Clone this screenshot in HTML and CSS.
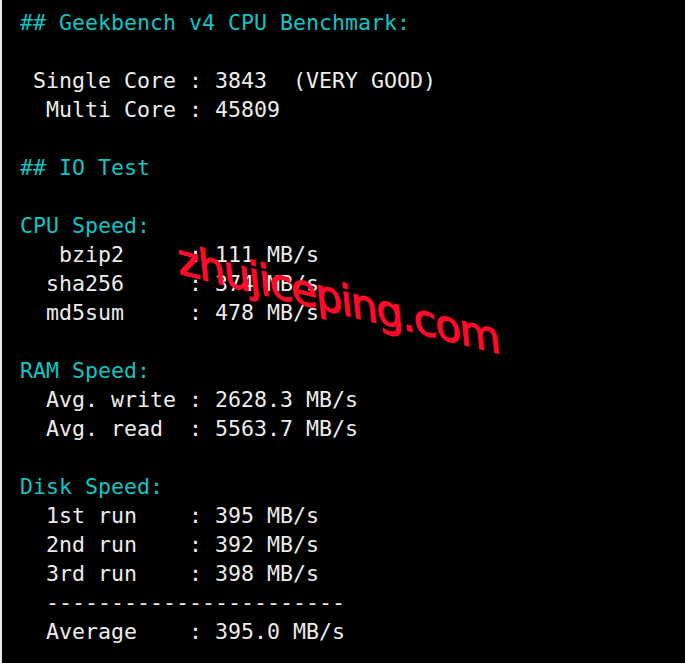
FILE: index.html
```html
<!DOCTYPE html>
<html>
<head>
<meta charset="utf-8">
<link rel="stylesheet" href="styles.css">
</head>
<body>
<div class="term">
<pre class="out"><span class="hd">## Geekbench v4 CPU Benchmark:</span>

 Single Core : 3843  (VERY GOOD)
  Multi Core : 45809

<span class="hd">## IO Test</span>

<span class="hd">CPU Speed:</span>
   bzip2     : 111 MB/s
  sha256     : 374 MB/s
  md5sum     : 478 MB/s

<span class="hd">RAM Speed:</span>
  Avg. write : 2628.3 MB/s
  Avg. read  : 5563.7 MB/s

<span class="hd">Disk Speed:</span>
  1st run    : 395 MB/s
  2nd run    : 392 MB/s
  3rd run    : 398 MB/s
  -----------------------
  Average    : 395.0 MB/s</pre>
<div class="mark">zhujiceping.com</div>
</div>
</body>
</html>
```
FILE: styles.css
```css
html, body {
  margin: 0;
  padding: 0;
  background: #000;
  height: 100%;
}
.term {
  position: relative;
  height: 100%;
  box-sizing: border-box;
  border-left: 2px solid #e6e6e6;
  background: #000;
  overflow: hidden;
}
.out {
  margin: 0;
  padding: 8px 0 0 18px;
  font-family: "DejaVu Sans Mono", "Liberation Mono", monospace;
  font-size: 21.6px;
  line-height: 29px;
  color: #ececec;
}
.hd {
  color: #10c4c4;
}
.mark {
  position: absolute;
  left: 178px;
  top: 239px;
  font-family: "DejaVu Sans", "Liberation Sans", sans-serif;
  font-size: 42px;
  line-height: 1;
  letter-spacing: -1.4px;
  color: #ff0a28;
  -webkit-text-stroke: 1.3px #ff0a28;
  transform-origin: 0 100%;
  transform: skewY(14deg) skewX(6deg);
  white-space: nowrap;
}
```
